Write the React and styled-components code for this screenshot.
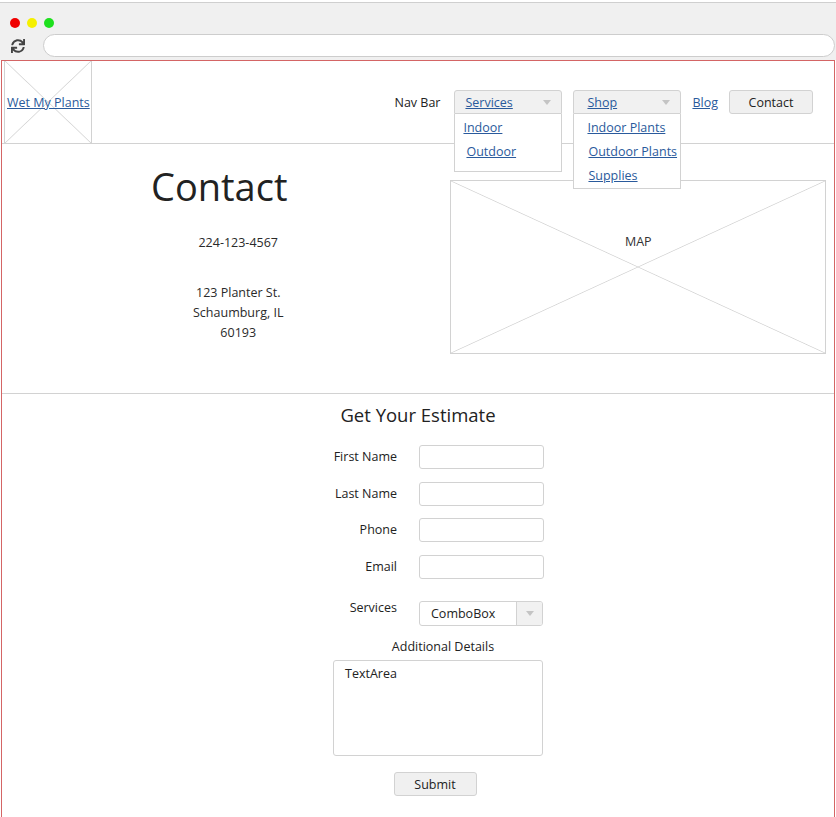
import React from "react";
import styled, { createGlobalStyle } from "styled-components";
import { FaSync } from "react-icons/fa";

const GlobalStyle = createGlobalStyle`
  html, body {
    margin: 0;
    padding: 0;
    overflow: hidden;
    background: #fff;
  }
  body {
    font-family: "Open Sans", "Noto Sans", sans-serif;
    font-size: 12.5px;
    color: #222;
  }
`;

const LINK = "#2a5a9c";
const LINE = "#d2d2d2";

// crossed-out placeholder, like a wireframe image
const cross = `
  linear-gradient(to top right, transparent calc(50% - 0.8px), #d8d8d8 50%, transparent calc(50% + 0.8px)),
  linear-gradient(to bottom right, transparent calc(50% - 0.8px), #d8d8d8 50%, transparent calc(50% + 0.8px))
`;

// browser chrome
const Chrome = styled.div`
  height: 58px;
  box-sizing: border-box;
  margin-top: 2px;
  border-top: 1px solid #cfcfcf;
  background: #f0f0f0;
  display: flex;
  flex-direction: column;
`;
const Dots = styled.div`
  display: flex;
  gap: 7px;
  padding: 15px 0 0 10px;
`;
const Dot = styled.span`
  width: 10px;
  height: 10px;
  border-radius: 50%;
  background: ${(p) => p.color};
`;
const AddressRow = styled.div`
  display: flex;
  align-items: center;
  margin-top: 6px;
  padding-left: 11px;
  color: #444;
`;
const UrlBar = styled.div`
  flex: 1;
  height: 23px;
  margin-left: 18px;
  margin-right: 1px;
  box-sizing: border-box;
  background: #fff;
  border: 1px solid #cdcdcd;
  border-radius: 12px;
`;

// page frame
const Frame = styled.div`
  margin: 0 1px;
  border: 1px solid #d46565;
  border-bottom: none;
  min-height: calc(100vh - 61px);
`;

const Header = styled.header`
  height: 82px;
  display: flex;
  align-items: center;
  border-bottom: 1px solid ${LINE};
  padding: 0 21px 0 2px;
`;
const LogoBox = styled.div`
  width: 88px;
  height: 100%;
  box-sizing: border-box;
  border: 1px solid ${LINE};
  border-top: none;
  border-bottom: none;
  background: ${cross};
  display: flex;
  align-items: center;
  padding-left: 2px;
`;
const Link = styled.a`
  color: ${LINK};
  text-decoration: underline;
  cursor: pointer;
  white-space: nowrap;
`;
const Nav = styled.nav`
  margin-left: auto;
  display: flex;
  align-items: center;
  gap: 11px;
`;
const NavLabel = styled.span`
  margin-right: 3px;
`;
const DropWrap = styled.div`
  position: relative;
  width: 108px;
`;
const DropHead = styled.div`
  height: 24px;
  box-sizing: border-box;
  border: 1px solid ${LINE};
  border-radius: 3px 3px 0 0;
  background: #f1f1f1;
  display: flex;
  align-items: center;
  justify-content: space-between;
  padding: 0 10px 0 ${(p) => p.inset}px;
`;
const Caret = styled.span`
  width: 0;
  height: 0;
  border-left: 4px solid transparent;
  border-right: 4px solid transparent;
  border-top: 5px solid #c4c4c4;
`;
const DropList = styled.div`
  position: absolute;
  top: 100%;
  left: 0;
  right: 0;
  z-index: 2;
  background: #fff;
  border: 1px solid ${LINE};
  border-top: none;
  min-height: ${(p) => p.minH}px;
  padding-top: 2px;
  box-sizing: border-box;
`;
const DropItem = styled.div`
  line-height: 24px;
  padding-left: ${(p) => p.inset}px;
`;
const GrayButton = styled.button`
  font: inherit;
  color: #222;
  width: ${(p) => p.w}px;
  height: 24px;
  background: #f0f0f0;
  border: 1px solid ${LINE};
  border-radius: 3px;
  padding: 0;
  cursor: pointer;
`;

// contact block
const ContactSection = styled.section`
  display: flex;
  align-items: flex-start;
  height: 249px;
  border-bottom: 1px solid ${LINE};
`;
const ContactInfo = styled.div`
  width: 449px;
  display: flex;
  flex-direction: column;
  align-items: center;
  padding-top: 19px;
`;
const BigTitle = styled.h1`
  margin: 0 14px 0 0;
  font-size: 38px;
  font-weight: 400;
  line-height: 46px;
  color: #222;
`;
const InfoText = styled.div`
  margin-left: 24px;
  margin-top: ${(p) => p.top}px;
  line-height: 20px;
  text-align: center;
  color: #2a2a2a;
`;
const MapBox = styled.div`
  width: 376px;
  height: 174px;
  box-sizing: border-box;
  margin: 36px 8px 0 auto;
  border: 1px solid ${LINE};
  background: ${cross};
  text-align: center;
  padding-top: 51px;
  line-height: 20px;
  color: #333;
`;

// estimate form
const EstimateSection = styled.section`
  display: flex;
  flex-direction: column;
  align-items: center;
  padding-top: 8px;
`;
const SubTitle = styled.h2`
  margin: 0;
  font-size: 18.5px;
  font-weight: 400;
  line-height: 26px;
  color: #222;
`;
const Form = styled.form`
  width: 210px;
  padding-left: 40px;
  margin-top: 17px;
  display: flex;
  flex-direction: column;
`;
const Row = styled.div`
  display: flex;
  align-items: ${(p) => (p.top ? "flex-start" : "center")};
  gap: 22px;
  margin-top: ${(p) => p.gap || 0}px;
`;
const Label = styled.label`
  width: 64px;
  flex: none;
  text-align: right;
  white-space: nowrap;
  line-height: ${(p) => (p.tight ? 14 : 20)}px;
`;
const TextInput = styled.input`
  width: 125px;
  height: 24px;
  box-sizing: border-box;
  border: 1px solid ${LINE};
  border-radius: 3px;
  font: inherit;
`;
const Combo = styled.div`
  width: 126px;
  height: 25px;
  box-sizing: border-box;
  border: 1px solid ${LINE};
  border-radius: 3px;
  display: flex;
  align-items: stretch;
  overflow: hidden;
`;
const ComboText = styled.span`
  flex: 1;
  display: flex;
  align-items: center;
  padding-left: 11px;
`;
const ComboButton = styled.span`
  width: 25px;
  border-left: 1px solid ${LINE};
  background: #f1f1f1;
  display: flex;
  align-items: center;
  justify-content: center;
`;
const CenterLabel = styled.div`
  text-align: center;
  line-height: 18px;
  margin-top: 12px;
  padding-left: 10px;
`;
const TextArea = styled.textarea`
  width: 210px;
  height: 96px;
  margin-top: 4px;
  box-sizing: border-box;
  border: 1px solid ${LINE};
  border-radius: 3px;
  padding: 4px 11px;
  font: inherit;
  color: #222;
  resize: none;
`;
const SubmitRow = styled.div`
  display: flex;
  justify-content: center;
  margin-top: 16px;
  padding-right: 6px;
`;

function Dropdown({ label, items, inset, itemInset, minH }) {
  return (
    <DropWrap>
      <DropHead inset={inset}>
        <Link>{label}</Link>
        <Caret />
      </DropHead>
      <DropList minH={minH}>
        {items.map((item, i) => (
          <DropItem key={item} inset={itemInset[i]}>
            <Link>{item}</Link>
          </DropItem>
        ))}
      </DropList>
    </DropWrap>
  );
}

const fields = ["First Name", "Last Name", "Phone", "Email"];

function App() {
  return (
    <>
      <GlobalStyle />
      <Chrome>
        <Dots>
          <Dot color="#f00000" />
          <Dot color="#f5f000" />
          <Dot color="#1ee01e" />
        </Dots>
        <AddressRow>
          <FaSync size={14} />
          <UrlBar />
        </AddressRow>
      </Chrome>
      <Frame>
        <Header>
          <LogoBox>
            <Link>Wet My Plants</Link>
          </LogoBox>
          <Nav>
            <NavLabel>Nav Bar</NavLabel>
            <Dropdown
              label="Services"
              items={["Indoor", "Outdoor"]}
              inset={10}
              itemInset={[8, 11]}
              minH={58}
            />
            <Dropdown
              label="Shop"
              items={["Indoor Plants", "Outdoor Plants", "Supplies"]}
              inset={13}
              itemInset={[13, 14, 14]}
              minH={73}
            />
            <Link>Blog</Link>
            <GrayButton w={84}>Contact</GrayButton>
          </Nav>
        </Header>

        <ContactSection>
          <ContactInfo>
            <BigTitle>Contact</BigTitle>
            <InfoText top={24}>224-123-4567</InfoText>
            <InfoText top={30}>
              123 Planter St.
              <br />
              Schaumburg, IL
              <br />
              60193
            </InfoText>
          </ContactInfo>
          <MapBox>MAP</MapBox>
        </ContactSection>

        <EstimateSection>
          <SubTitle>Get Your Estimate</SubTitle>
          <Form onSubmit={(e) => e.preventDefault()}>
            {fields.map((f, i) => (
              <Row key={f} gap={i === 0 ? 0 : i === 2 ? 12 : 13}>
                <Label>{f}</Label>
                <TextInput />
              </Row>
            ))}
            <Row top gap={22}>
              <Label tight>Services</Label>
              <Combo>
                <ComboText>ComboBox</ComboText>
                <ComboButton>
                  <Caret />
                </ComboButton>
              </Combo>
            </Row>
            <CenterLabel>Additional Details</CenterLabel>
            <TextArea defaultValue="TextArea" />
            <SubmitRow>
              <GrayButton w={83}>Submit</GrayButton>
            </SubmitRow>
          </Form>
        </EstimateSection>
      </Frame>
    </>
  );
}

export default App;
